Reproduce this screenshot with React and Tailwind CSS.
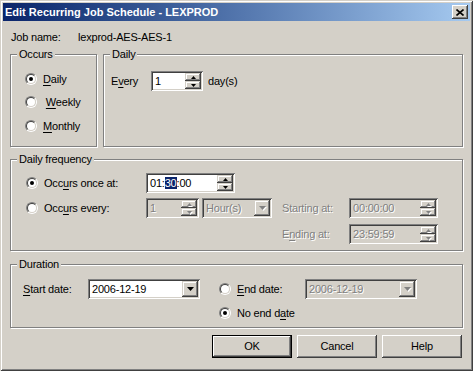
import React from 'react';

const raised =
  'shadow-[inset_-1px_-1px_0_#404040,inset_1px_1px_0_#d4d0c8,inset_-2px_-2px_0_#808080,inset_2px_2px_0_#ffffff]';
const pushed =
  'shadow-[inset_-1px_-1px_0_#404040,inset_1px_1px_0_#ffffff,inset_-2px_-2px_0_#808080,inset_2px_2px_0_#d4d0c8]';
const sunken =
  'shadow-[inset_1px_1px_0_#808080,inset_-1px_-1px_0_#ffffff,inset_2px_2px_0_#404040,inset_-2px_-2px_0_#d4d0c8]';
const dim = 'text-[#808080] [text-shadow:1px_1px_0_#ffffff]';

const Group = ({ label, className, children }) => (
  <div
    className={`relative border border-[#808080] shadow-[inset_1px_1px_0_#ffffff,1px_1px_0_#ffffff] ${className}`}
  >
    <span className="absolute top-[-8px] left-[6px] px-[2px] bg-[#d4d0c8] leading-[14px]">
      {label}
    </span>
    {children}
  </div>
);

const Radio = ({ checked, label, className = '' }) => (
  <div className={`flex items-center h-[14px] ${className}`}>
    <div className="w-[12px] h-[12px] rounded-full border border-[#808080] border-r-white border-b-white">
      <div className="w-full h-full rounded-full border border-[#404040] border-r-[#d4d0c8] border-b-[#d4d0c8] bg-white flex items-center justify-center">
        {checked && <div className="w-[4px] h-[4px] rounded-full bg-black" />}
      </div>
    </div>
    <span className="ml-[6px]">{label}</span>
  </div>
);

const U = ({ children }) => <span className="underline underline-offset-2">{children}</span>;

const Tri = ({ up, w = 5, color = '#000' }) => (
  <svg width={w} height={Math.ceil(w / 2)} viewBox={`0 0 ${w} ${Math.ceil(w / 2)}`}>
    <polygon
      points={up ? `0,${Math.ceil(w / 2)} ${w},${Math.ceil(w / 2)} ${w / 2},0` : `0,0 ${w},0 ${w / 2},${Math.ceil(w / 2)}`}
      fill={color}
    />
  </svg>
);

const Arrow = ({ up, disabled, w = 5 }) =>
  disabled ? (
    <div className="relative">
      <div className="absolute left-[1px] top-[1px]">
        <Tri up={up} w={w} color="#ffffff" />
      </div>
      <div className="relative flex">
        <Tri up={up} w={w} color="#808080" />
      </div>
    </div>
  ) : (
    <Tri up={up} w={w} />
  );

const Spin = ({ disabled }) => (
  <div className="flex flex-col w-[16px] h-full py-[2px] mr-[2px]">
    <div className={`flex-1 flex items-center justify-center bg-[#d4d0c8] ${raised}`}>
      <Arrow up disabled={disabled} />
    </div>
    <div className={`flex-1 flex items-center justify-center bg-[#d4d0c8] ${raised}`}>
      <Arrow disabled={disabled} />
    </div>
  </div>
);

const Drop = ({ disabled }) => (
  <div
    className={`w-[16px] h-full my-[2px] mr-[2px] flex items-center justify-center bg-[#d4d0c8] ${raised}`}
    style={{ height: 'calc(100% - 4px)' }}
  >
    <Arrow disabled={disabled} w={7} />
  </div>
);

const Field = ({ w, disabled, children, spin, drop, white }) => (
  <div
    className={`flex items-center h-[20px] ${sunken} ${disabled && !white ? 'bg-[#d4d0c8]' : 'bg-white'}`}
    style={{ width: w }}
  >
    <div className={`flex-1 pl-[4px] leading-[14px] ${disabled ? dim : ''}`}>{children}</div>
    {spin && <Spin disabled={disabled} />}
    {drop && <Drop disabled={disabled} />}
  </div>
);

const Button = ({ children, isDefault }) =>
  isDefault ? (
    <div className="w-[80px] h-[23px] border border-black">
      <div className={`w-full h-full flex items-center justify-center bg-[#d4d0c8] ${pushed}`}>
        {children}
      </div>
    </div>
  ) : (
    <div className={`w-[80px] h-[23px] flex items-center justify-center bg-[#d4d0c8] ${pushed}`}>
      {children}
    </div>
  );

export default function App() {
  return (
    <div className="w-[473px] h-[371px] bg-[#d4d0c8] p-[3px] text-[11px] tracking-[-0.2px] text-black font-['Liberation_Sans',Arial,sans-serif] shadow-[inset_1px_1px_0_#d4d0c8,inset_-1px_-1px_0_#404040,inset_2px_2px_0_#ffffff,inset_-2px_-2px_0_#808080]">
      {/* title bar */}
      <div className="h-[18px] flex items-center justify-between bg-linear-to-r from-[#0a246a] to-[#a6caf0] pl-[2px] pr-[2px]">
        <span className="text-white font-bold tracking-normal">Edit Recurring Job Schedule - LEXPROD</span>
        <div className={`w-[16px] h-[14px] flex items-center justify-center bg-[#d4d0c8] ${pushed}`}>
          <svg width="8" height="7" viewBox="0 0 8 7">
            <path d="M0.5 0.5 L7.5 6.5 M7.5 0.5 L0.5 6.5" stroke="#000" strokeWidth="1.6" />
          </svg>
        </div>
      </div>

      <div className="px-[7px]">
        <div className="flex items-center h-[14px] mt-[9px]">
          <span className="w-[68px] pl-[1px]">Job name:</span>
          <span>lexprod-AES-AES-1</span>
        </div>

        <div className="flex gap-[6px] mt-[10px]">
          <Group label="Occurs" className="w-[87px] h-[93px]">
            <div className="pl-[14px] pt-[17px]">
              <Radio checked label={<><U>D</U>aily</>} />
              <Radio className="mt-[9px]" label={<>&nbsp;<U>W</U>eekly</>} />
              <Radio className="mt-[10px]" label={<><U>M</U>onthly</>} />
            </div>
          </Group>
          <Group label="Daily" className="flex-1 h-[93px]">
            <div className="flex items-center pl-[7px] pt-[16px]">
              <span className="w-[40px]">
                E<U>v</U>ery
              </span>
              <Field w={52} spin>
                1
              </Field>
              <span className="ml-[5px]">day(s)</span>
            </div>
          </Group>
        </div>

        <Group label="Daily frequency" className="mt-[12px] h-[92px]">
          <div className="pl-[15px] pt-[13px]">
            <div className="flex items-center">
              <Radio className="w-[120px]" checked label={<>Occ<U>u</U>rs once at:</>} />
              <Field w={89} spin>
                01:<span className="bg-[#0a246a] text-white">30</span>:00
              </Field>
            </div>
            <div className="flex items-center mt-[5px]">
              <Radio className="w-[120px]" label={<>Occ<U>u</U>rs every:</>} />
              <Field w={53} spin disabled>
                1
              </Field>
              <div className="ml-[3px]">
                <Field w={70} drop disabled>
                  Hour(s)
                </Field>
              </div>
              <span className={`ml-[10px] w-[67px] ${dim}`}>Starting at:</span>
              <Field w={89} spin disabled>
                00:00:00
              </Field>
            </div>
            <div className="flex items-center mt-[6px] pl-[256px]">
              <span className={`w-[67px] ${dim}`}>
                E<U>n</U>ding at:
              </span>
              <Field w={89} spin disabled>
                23:59:59
              </Field>
            </div>
          </div>
        </Group>

        <Group label="Duration" className="mt-[13px] h-[64px]">
          <div className="pl-[12px] pt-[14px]">
            <div className="flex items-center">
              <span className="w-[65px]">
                <U>S</U>tart date:
              </span>
              <Field w={112} drop>
                2006-12-19
              </Field>
              <Radio className="ml-[19px] w-[86px]" label={<><U>E</U>nd date:</>} />
              <Field w={112} drop disabled>
                2006-12-19
              </Field>
            </div>
            <Radio className="mt-[7px] ml-[196px]" checked label={<>No end d<U>a</U>te</>} />
          </div>
        </Group>

        <div className="flex justify-end gap-[5px] mt-[7px] pr-[1px]">
          <Button isDefault>OK</Button>
          <Button>Cancel</Button>
          <Button>Help</Button>
        </div>
      </div>
    </div>
  );
}
